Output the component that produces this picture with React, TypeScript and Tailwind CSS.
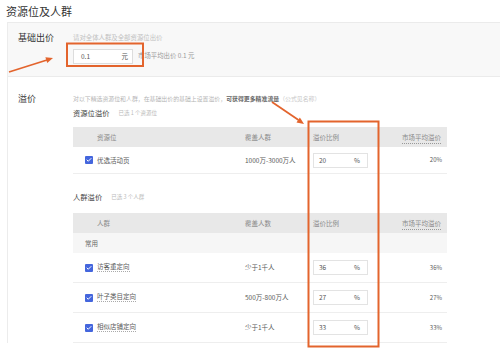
import { Check } from 'lucide-react'

interface PremiumRow {
  name: string
  cover: string
  value: string
  avg: string
}

const SLOT_ROWS: PremiumRow[] = [
  { name: '优选活动页', cover: '1000万-3000万人', value: '20', avg: '20%' },
]

const CROWD_ROWS: PremiumRow[] = [
  { name: '访客重定向', cover: '少于1千人', value: '36', avg: '36%' },
  { name: '叶子类目定向', cover: '500万-800万人', value: '27', avg: '27%' },
  { name: '相似店铺定向', cover: '少于1千人', value: '33', avg: '33%' },
]

const ORANGE = '#e3642d'

function CheckBox() {
  return (
    <span className="flex h-[8px] w-[8px] items-center justify-center rounded-[1px] bg-[#4466dd]">
      <Check className="h-[6px] w-[6px] text-white" strokeWidth={4} />
    </span>
  )
}

function PercentInput({ value }: { value: string }) {
  return (
    <div className="flex h-[15px] w-[55px] items-center justify-between border border-[#e3e3e3] bg-white pl-[5px] pr-[7px] text-[6.5px] leading-none text-[#555]">
      <span>{value}</span>
      <span>%</span>
    </div>
  )
}

function TableHeader({ first, second }: { first: string; second: string }) {
  return (
    <div className="grid h-[20px] grid-cols-[172px_68px_70px_1fr] items-center bg-[#e8e8e8] text-[6.5px] leading-none text-[#8a8a8a]">
      <span className="pl-[24px]">{first}</span>
      <span>{second}</span>
      <span>溢价比例</span>
      <span className="justify-self-end pr-[6px]">
        <span className="border-b border-dotted border-[#999] pb-[1px]">市场平均溢价</span>
      </span>
    </div>
  )
}

function TableRow({ row, height, underline }: { row: PremiumRow; height: string; underline?: boolean }) {
  return (
    <div className={`grid ${height} grid-cols-[172px_68px_70px_1fr] items-center border-b border-[#eeeeee] bg-white text-[6.5px] leading-none text-[#5a5a5a]`}>
      <div className="flex items-center gap-[4px] pl-[12px]">
        <CheckBox />
        <span className={underline ? 'border-b border-dotted border-[#aaa] pb-[1px]' : ''}>{row.name}</span>
      </div>
      <span>{row.cover}</span>
      <PercentInput value={row.value} />
      <span className="justify-self-end pr-[5px] text-[6px]">{row.avg}</span>
    </div>
  )
}

export default function App() {
  return (
    <div className="relative h-[352px] w-[500px] overflow-hidden bg-white font-['Noto_Sans_CJK_SC','Noto_Sans',sans-serif]">
      <h1 className="pl-[6px] pt-[3px] text-[11px] leading-[16px] text-[#333]">资源位及人群</h1>

      <div className="ml-[7px] mt-[3px] border-l border-[#ececec]">
        {/* 基础出价 */}
        <div className="flex h-[55px] border-y border-[#ebebeb] bg-[#f8f8f8] pt-[9px]">
          <div className="w-[65px] shrink-0 pl-[10px] text-[9px] leading-[12px] text-[#333]">基础出价</div>
          <div>
            <p className="text-[6.4px] leading-[12px] text-[#c0c0c0]">请对全体人群及全部资源位出价</p>
            <div className="mt-[5px] flex items-center">
              <div className="flex h-[15px] w-[60px] items-center justify-between border border-[#dddddd] bg-white pl-[7px] pr-[4px] text-[6.5px] leading-none text-[#555]">
                <span>0.1</span>
                <span>元</span>
              </div>
              <span className="ml-[5px] text-[6.4px] leading-none text-[#999]">市场平均出价 0.1 元</span>
            </div>
          </div>
        </div>

        {/* 溢价 */}
        <div className="flex pt-[16px]">
          <div className="w-[65px] shrink-0 pl-[10px] text-[9px] leading-[12px] text-[#333]">溢价</div>
          <div className="w-[374px]">
            <p className="whitespace-nowrap text-[5.9px] leading-[12px] text-[#b5b5b5]">
              对以下精选资源位和人群，在基础出价的基础上设置溢价，
              <span className="font-bold text-[#666]">可获得更多精准流量</span>
              <span className="text-[#c8c8c8]">（公式见名称）</span>
            </p>

            <div className="mt-[2px] flex items-center gap-[9px] leading-[12px]">
              <span className="text-[7.3px] text-[#444]">资源位溢价</span>
              <span className="text-[5.5px] text-[#bbb]">已选 1 个资源位</span>
            </div>
            <div className="mt-[8px]">
              <TableHeader first="资源位" second="覆盖人群" />
              {SLOT_ROWS.map((row) => (
                <TableRow key={row.name} row={row} height="h-[27px]" />
              ))}
            </div>

            <div className="mt-[17px] flex items-center gap-[9px] leading-[12px]">
              <span className="text-[7.3px] text-[#444]">人群溢价</span>
              <span className="text-[5.5px] text-[#bbb]">已选 3 个人群</span>
            </div>
            <div className="mt-[10px]">
              <TableHeader first="人群" second="覆盖人数" />
              <div className="flex h-[20px] items-center bg-[#f6f6f6] pl-[12px] text-[6.5px] leading-none text-[#666]">常用</div>
              {CROWD_ROWS.map((row) => (
                <TableRow key={row.name} row={row} height="h-[30px]" underline />
              ))}
            </div>
          </div>
        </div>
      </div>

      {/* annotation marks */}
      <svg className="pointer-events-none absolute left-0 top-0" width="500" height="352" viewBox="0 0 500 352">
        <rect x="67" y="43.5" width="76" height="22.5" fill="none" stroke={ORANGE} strokeWidth="2" />
        <rect x="308.5" y="121.5" width="70" height="225" fill="none" stroke={ORANGE} strokeWidth="2" />
        <line x1="9" y1="72" x2="47" y2="60" stroke={ORANGE} strokeWidth="1.8" />
        <polygon points="53,58 47.2,63 45.4,57.3" fill={ORANGE} />
        <line x1="272" y1="102" x2="298.5" y2="120" stroke={ORANGE} strokeWidth="1.8" />
        <polygon points="304,124 296.5,122.5 299.9,117.5" fill={ORANGE} />
      </svg>
    </div>
  )
}
